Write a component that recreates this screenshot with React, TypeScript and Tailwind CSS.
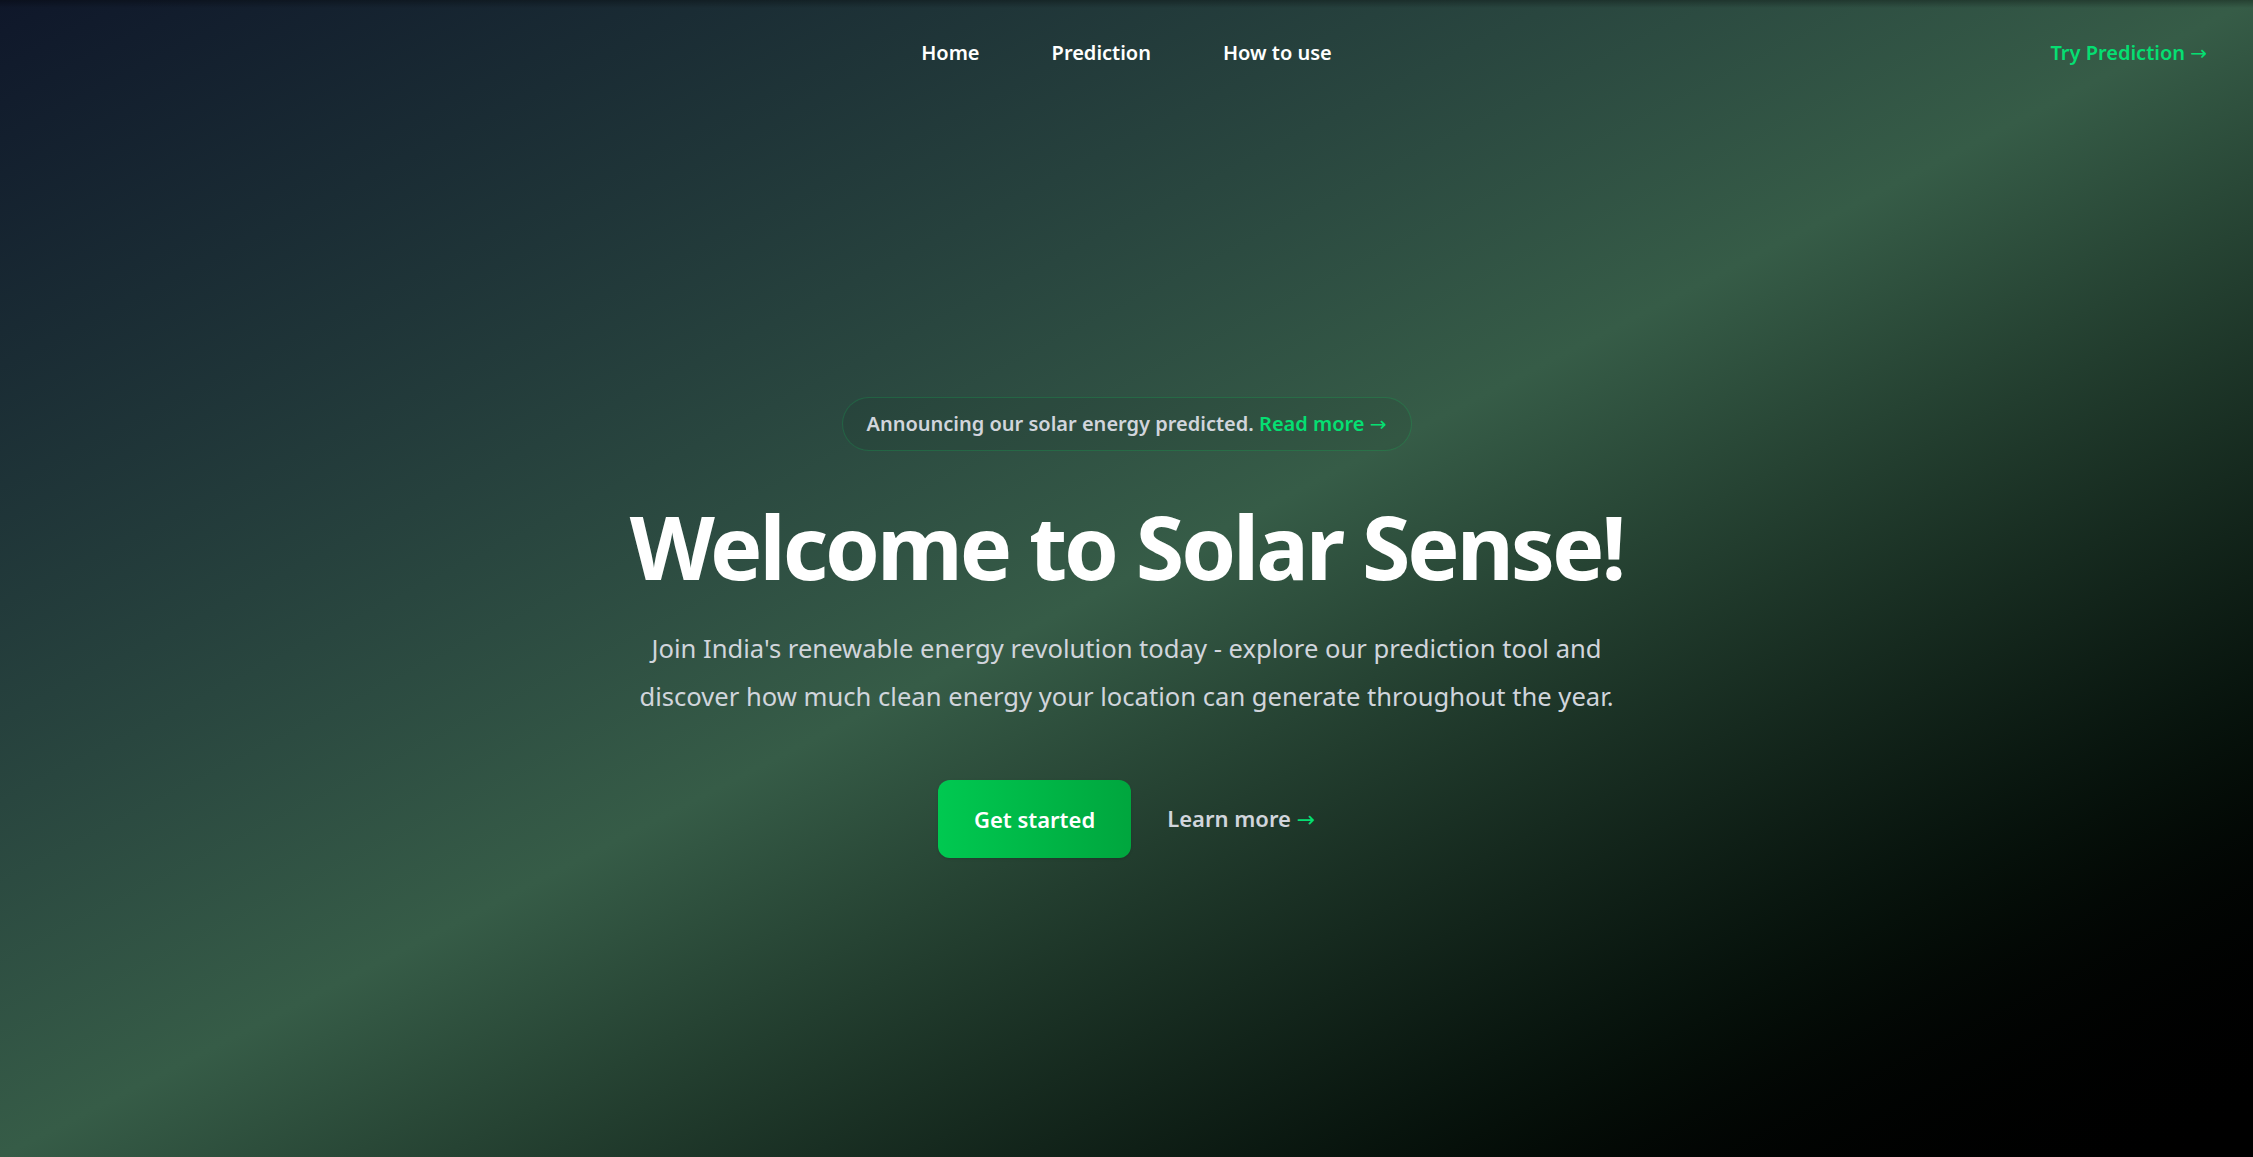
import React from "react";

const navLinks = ["Home", "Prediction", "How to use"];

function Arrow({ className = "" }: { className?: string }) {
  return (
    <span aria-hidden="true" className={`font-normal ${className}`} style={{ fontFamily: '"DejaVu Sans", sans-serif' }}>
      &rarr;
    </span>
  );
}

export default function App() {
  return (
    <div
      className="relative min-h-screen w-full overflow-hidden bg-gradient-to-br from-[#0f172a] via-[#365c47] to-black text-white"
      style={{ fontFamily: '"Noto Sans", "Open Sans", sans-serif' }}
    >
      {/* top edge shade */}
      <div className="pointer-events-none absolute inset-x-0 top-0 h-2 bg-gradient-to-b from-black/30 to-transparent" />

      <header>
        <nav className="flex h-[106px] items-center justify-between px-[46px]">
          <div className="flex-1" />
          <div className="flex gap-x-[72px]">
            {navLinks.map((l) => (
              <a key={l} href="#" className="text-[20px] font-semibold leading-9 text-white">
                {l}
              </a>
            ))}
          </div>
          <div className="flex flex-1 justify-end">
            <a href="#" className="text-[20px] font-semibold leading-9 text-green-400">
              Try Prediction <Arrow />
            </a>
          </div>
        </nav>
      </header>

      <main className="flex flex-col items-center px-9 pt-[292px] text-center">
        <div className="rounded-full bg-black/5 px-6 py-2 text-[20px] font-semibold leading-9 text-gray-300 ring-1 ring-green-500/20">
          Announcing our solar energy predicted.{" "}
          <a href="#" className="text-green-400">
            Read more <Arrow />
          </a>
        </div>

        <h1 className="mt-[44px] text-[88px] font-bold leading-[1.2] tracking-[-0.035em] text-white">
          Welcome to Solar Sense!
        </h1>

        <p className="mt-[25px] max-w-[1000px] text-[25.6px] leading-[48px] text-gray-300">
          Join India's renewable energy revolution today - explore our prediction tool and discover how much clean
          energy your location can generate throughout the year.
        </p>

        <div className="mt-[59px] flex items-center justify-center gap-x-9">
          <a
            href="#"
            className="rounded-xl bg-gradient-to-r from-green-500 to-green-600 px-9 py-[21px] text-[22px] font-semibold leading-9 text-white shadow-sm"
          >
            Get started
          </a>
          <a href="#" className="text-[22px] font-semibold leading-9 text-gray-300">
            Learn more <Arrow className="text-green-400" />
          </a>
        </div>
      </main>
    </div>
  );
}
